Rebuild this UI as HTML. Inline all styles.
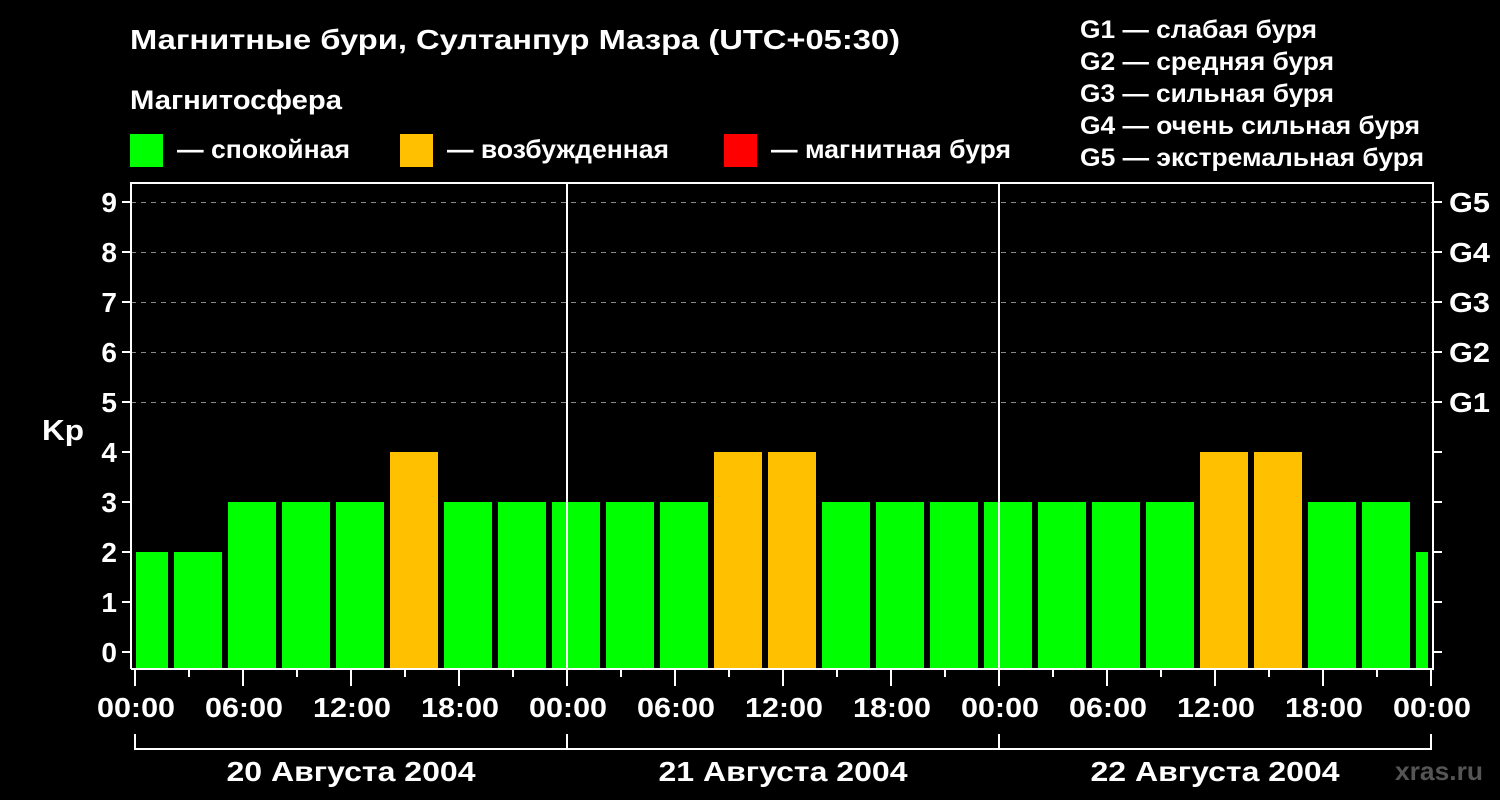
<!DOCTYPE html>
<html><head><meta charset="utf-8"><style>
html,body{margin:0;padding:0;background:#000;}
svg{display:block}
text{font-family:"Liberation Sans",sans-serif;font-weight:bold;fill:#fff}
</style></head><body>
<svg width="1500" height="800" viewBox="0 0 1500 800" xmlns="http://www.w3.org/2000/svg">
<rect width="1500" height="800" fill="#000"/>
<text x="130" y="49" font-size="28" textLength="770" lengthAdjust="spacingAndGlyphs">Магнитные бури, Султанпур Мазра (UTC+05:30)</text>
<text x="130" y="109" font-size="27" textLength="212" lengthAdjust="spacingAndGlyphs">Магнитосфера</text>
<rect x="130" y="134" width="33" height="33" fill="#00ff00"/>
<text x="177" y="158" font-size="26" textLength="173" lengthAdjust="spacingAndGlyphs">— спокойная</text>
<rect x="400" y="134" width="33" height="33" fill="#ffc000"/>
<text x="447" y="158" font-size="26" textLength="222" lengthAdjust="spacingAndGlyphs">— возбужденная</text>
<rect x="724" y="134" width="33" height="33" fill="#ff0000"/>
<text x="771" y="158" font-size="26" textLength="240" lengthAdjust="spacingAndGlyphs">— магнитная буря</text>
<g font-size="25" lengthAdjust="spacingAndGlyphs">
<text x="1080" y="38" textLength="237" lengthAdjust="spacingAndGlyphs">G1 — слабая буря</text>
<text x="1080" y="70" textLength="254" lengthAdjust="spacingAndGlyphs">G2 — средняя буря</text>
<text x="1080" y="102" textLength="254" lengthAdjust="spacingAndGlyphs">G3 — сильная буря</text>
<text x="1080" y="134" textLength="340" lengthAdjust="spacingAndGlyphs">G4 — очень сильная буря</text>
<text x="1080" y="166" textLength="344" lengthAdjust="spacingAndGlyphs">G5 — экстремальная буря</text>
</g>
<g stroke="#888" stroke-width="1" stroke-dasharray="5,5">
<line x1="131" y1="202.5" x2="1433" y2="202.5"/>
<line x1="131" y1="252.5" x2="1433" y2="252.5"/>
<line x1="131" y1="302.5" x2="1433" y2="302.5"/>
<line x1="131" y1="352.5" x2="1433" y2="352.5"/>
<line x1="131" y1="402.5" x2="1433" y2="402.5"/>
</g>
<g fill="#00ff00">
<rect x="136" y="552" width="32" height="116"/>
<rect x="174" y="552" width="48" height="116"/>
<rect x="228" y="502" width="48" height="166"/>
<rect x="282" y="502" width="48" height="166"/>
<rect x="336" y="502" width="48" height="166"/>
<rect x="444" y="502" width="48" height="166"/>
<rect x="498" y="502" width="48" height="166"/>
<rect x="552" y="502" width="48" height="166"/>
<rect x="606" y="502" width="48" height="166"/>
<rect x="660" y="502" width="48" height="166"/>
<rect x="822" y="502" width="48" height="166"/>
<rect x="876" y="502" width="48" height="166"/>
<rect x="930" y="502" width="48" height="166"/>
<rect x="984" y="502" width="48" height="166"/>
<rect x="1038" y="502" width="48" height="166"/>
<rect x="1092" y="502" width="48" height="166"/>
<rect x="1146" y="502" width="48" height="166"/>
<rect x="1308" y="502" width="48" height="166"/>
<rect x="1362" y="502" width="48" height="166"/>
<rect x="1416" y="552" width="12" height="116"/>
</g>
<g fill="#ffc000">
<rect x="390" y="452" width="48" height="216"/>
<rect x="714" y="452" width="48" height="216"/>
<rect x="768" y="452" width="48" height="216"/>
<rect x="1200" y="452" width="48" height="216"/>
<rect x="1254" y="452" width="48" height="216"/>
</g>
<g stroke="#fff" stroke-width="2" fill="none">
<path d="M131 669 V183 H1433 V669 H131"/>
<line x1="567" y1="183" x2="567" y2="668"/>
<line x1="999" y1="183" x2="999" y2="668"/>
<path d="M122 202H131M122 252H131M122 302H131M122 352H131M122 402H131M122 452H131M122 502H131M122 552H131M122 602H131M122 652H131"/>
<path d="M1433 202H1442M1433 252H1442M1433 302H1442M1433 352H1442M1433 402H1442M1433 452H1442M1433 502H1442M1433 552H1442M1433 602H1442M1433 652H1442"/>
<path d="M135 669V686M243 669V686M351 669V686M459 669V686M567 669V686M675 669V686M783 669V686M891 669V686M999 669V686M1107 669V686M1215 669V686M1323 669V686M1431 669V686"/>
<path d="M189 669V677M297 669V677M405 669V677M513 669V677M621 669V677M729 669V677M837 669V677M945 669V677M1053 669V677M1161 669V677M1269 669V677M1377 669V677"/>
<path d="M135 734V749H1431V734M567 734V749M999 734V749"/>
</g>
<g font-size="28" text-anchor="end">
<text x="117" y="212">9</text><text x="117" y="262">8</text><text x="117" y="312">7</text>
<text x="117" y="362">6</text><text x="117" y="412">5</text><text x="117" y="462">4</text>
<text x="117" y="512">3</text><text x="117" y="562">2</text><text x="117" y="612">1</text>
<text x="117" y="662">0</text>
</g>
<text x="42" y="440" font-size="29" textLength="42" lengthAdjust="spacingAndGlyphs">Kp</text>
<g font-size="28">
<text x="1449" y="212" textLength="41" lengthAdjust="spacingAndGlyphs">G5</text><text x="1449" y="262" textLength="41" lengthAdjust="spacingAndGlyphs">G4</text><text x="1449" y="312" textLength="41" lengthAdjust="spacingAndGlyphs">G3</text>
<text x="1449" y="362" textLength="41" lengthAdjust="spacingAndGlyphs">G2</text><text x="1449" y="412" textLength="41" lengthAdjust="spacingAndGlyphs">G1</text>
</g>
<g font-size="28" text-anchor="middle">
<text x="136" y="717" textLength="78" lengthAdjust="spacingAndGlyphs">00:00</text><text x="244" y="717" textLength="78" lengthAdjust="spacingAndGlyphs">06:00</text><text x="352" y="717" textLength="78" lengthAdjust="spacingAndGlyphs">12:00</text>
<text x="460" y="717" textLength="78" lengthAdjust="spacingAndGlyphs">18:00</text><text x="568" y="717" textLength="78" lengthAdjust="spacingAndGlyphs">00:00</text><text x="676" y="717" textLength="78" lengthAdjust="spacingAndGlyphs">06:00</text>
<text x="784" y="717" textLength="78" lengthAdjust="spacingAndGlyphs">12:00</text><text x="892" y="717" textLength="78" lengthAdjust="spacingAndGlyphs">18:00</text><text x="1000" y="717" textLength="78" lengthAdjust="spacingAndGlyphs">00:00</text>
<text x="1108" y="717" textLength="78" lengthAdjust="spacingAndGlyphs">06:00</text><text x="1216" y="717" textLength="78" lengthAdjust="spacingAndGlyphs">12:00</text><text x="1324" y="717" textLength="78" lengthAdjust="spacingAndGlyphs">18:00</text>
<text x="1432" y="717" textLength="78" lengthAdjust="spacingAndGlyphs">00:00</text>
<text x="351" y="781" textLength="249" lengthAdjust="spacingAndGlyphs">20 Августа 2004</text>
<text x="783" y="781" textLength="249" lengthAdjust="spacingAndGlyphs">21 Августа 2004</text>
<text x="1215" y="781" textLength="249" lengthAdjust="spacingAndGlyphs">22 Августа 2004</text>
</g>
<text x="1395" y="780" font-size="26" textLength="88" lengthAdjust="spacingAndGlyphs" style="fill:#555">xras.ru</text>
</svg>
</body></html>
